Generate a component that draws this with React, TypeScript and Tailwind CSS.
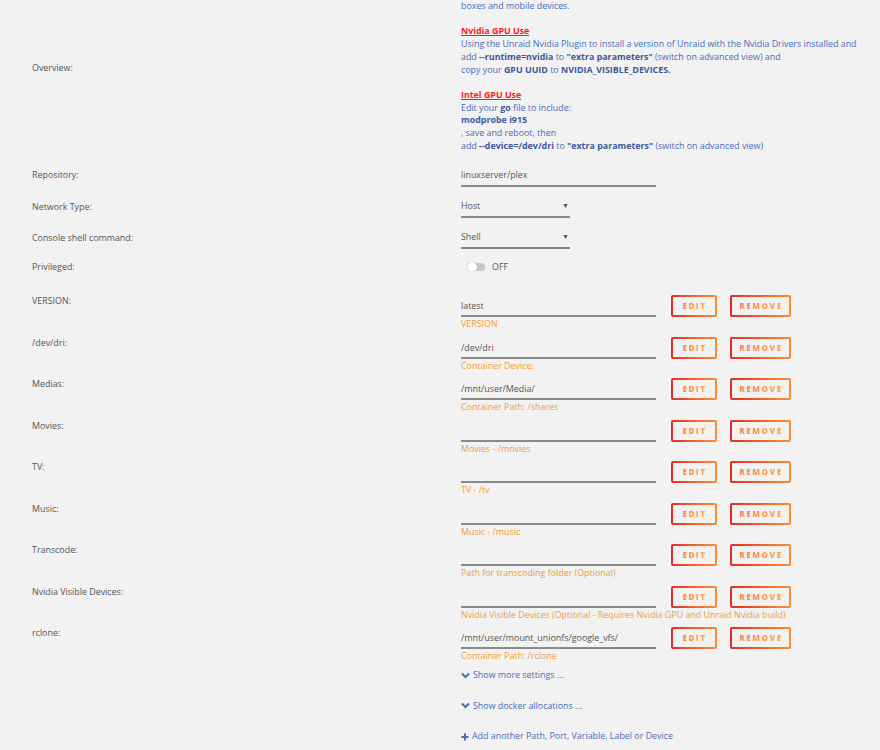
import React from 'react';

const font = { fontFamily: '"Open Sans", "Liberation Sans", sans-serif' };

interface ConfigRow {
  label: string;
  value: string;
  help: string;
}

const rows: ConfigRow[] = [
  { label: 'VERSION:', value: 'latest', help: 'VERSION' },
  { label: '/dev/dri:', value: '/dev/dri', help: 'Container Device:' },
  { label: 'Medias:', value: '/mnt/user/Media/', help: 'Container Path: /shares' },
  { label: 'Movies:', value: '', help: 'Movies - /movies' },
  { label: 'TV:', value: '', help: 'TV - /tv' },
  { label: 'Music:', value: '', help: 'Music - /music' },
  { label: 'Transcode:', value: '', help: 'Path for transcoding folder (Optional)' },
  { label: 'Nvidia Visible Devices:', value: '', help: 'Nvidia Visible Devices (Optional - Requires Nvidia GPU and Unraid Nvidia build)' },
  { label: 'rclone:', value: '/mnt/user/mount_unionfs/google_vfs/', help: 'Container Path: /rclone' },
];

const GradButton: React.FC<{ text: string; width: string }> = ({ text, width }) => (
  <div className={`bg-linear-to-r from-[#e22828] to-[#ff8c2f] p-[2px] rounded-[2px] h-[22px] ${width}`}>
    <div className="w-full h-full bg-[#f2f2f2] flex items-center justify-center">
      <span className="bg-linear-to-r from-[#f5894e] to-[#ffa650] bg-clip-text text-transparent text-[8px] font-extrabold tracking-[0.2em] leading-none pl-[1px]">
        {text}
      </span>
    </div>
  </div>
);

const Chevron = () => (
  <svg width="9" height="7" viewBox="0 0 10 7" className="mr-[3px]">
    <path d="M1 1.2 L5 5.2 L9 1.2" fill="none" stroke="#486dba" strokeWidth="2.2" />
  </svg>
);

const Plus = () => (
  <svg width="8" height="8" viewBox="0 0 8 8" className="mr-[3px]">
    <path d="M4 0.5 V7.5 M0.5 4 H7.5" fill="none" stroke="#486dba" strokeWidth="2" />
  </svg>
);

const Label: React.FC<{ children: React.ReactNode; className?: string }> = ({ children, className }) => (
  <div className={`pl-[32px] text-[#555] ${className ?? ''}`}>{children}</div>
);

export default function App() {
  return (
    <div className="min-h-screen w-[880px] h-[750px] overflow-hidden bg-[#f2f2f2] text-[8.9px] leading-[12.7px]" style={font}>
      {/* Overview */}
      <div className="grid grid-cols-[461px_1fr]">
        <Label className="pt-[62px]">Overview:</Label>
        <div className="text-[#486dba]">
          <p>boxes and mobile devices.</p>
          <p>&nbsp;</p>
          <p className="text-[#ff1a1a] font-bold underline">Nvidia GPU Use</p>
          <p>Using the Unraid Nvidia Plugin to install a version of Unraid with the Nvidia Drivers installed and</p>
          <p>add <b className="text-[#3d5a99]">--runtime=nvidia</b> to <b className="text-[#3d5a99]">"extra parameters"</b> (switch on advanced view) and</p>
          <p>copy your <b className="text-[#3d5a99]">GPU UUID</b> to <b className="text-[#3d5a99]">NVIDIA_VISIBLE_DEVICES.</b></p>
          <p>&nbsp;</p>
          <p className="text-[#ff1a1a] font-bold underline">Intel GPU Use</p>
          <p>Edit your <b className="text-[#3d5a99]">go</b> file to include:</p>
          <p><b className="text-[#3d5a99]">modprobe i915</b></p>
          <p>, save and reboot, then</p>
          <p>add <b className="text-[#3d5a99]">--device=/dev/dri</b> to <b className="text-[#3d5a99]">"extra parameters"</b> (switch on advanced view)</p>
        </div>
      </div>

      {/* Repository */}
      <div className="grid grid-cols-[461px_1fr] mt-[12px] h-[32px]">
        <Label className="pt-[5px]">Repository:</Label>
        <div className="w-[195px] h-[23px] border-b-2 border-[#8a8a8a] flex items-center text-[#555]">linuxserver/plex</div>
      </div>

      {/* Network Type */}
      <div className="grid grid-cols-[461px_1fr] h-[31px]">
        <Label className="pt-[5px]">Network Type:</Label>
        <div className="w-[109px] h-[22px] border-b-2 border-[#8a8a8a] flex items-center justify-between text-[#555]">
          <span>Host</span>
          <span className="text-[7px] pr-[1px]">▼</span>
        </div>
      </div>

      {/* Console */}
      <div className="grid grid-cols-[461px_1fr] h-[30px]">
        <Label className="pt-[5px]">Console shell command:</Label>
        <div className="w-[109px] h-[22px] border-b-2 border-[#8a8a8a] flex items-center justify-between text-[#555]">
          <span>Shell</span>
          <span className="text-[7px] pr-[1px]">▼</span>
        </div>
      </div>

      {/* Privileged */}
      <div className="grid grid-cols-[461px_1fr] h-[38px]">
        <Label className="pt-[4px]">Privileged:</Label>
        <div className="flex items-start pt-[6px] pl-[6px]">
          <div className="w-[18px] h-[8px] rounded-full bg-[#c8c8c8] relative">
            <div className="absolute left-0 top-[-1px] w-[10px] h-[10px] rounded-full bg-white shadow-[0_0_1px_rgba(0,0,0,0.4)]" />
          </div>
          <span className="ml-[7px] text-[#555] -mt-[2px]">OFF</span>
        </div>
      </div>

      {/* Config rows */}
      {rows.map((r) => (
        <div key={r.label} className="grid grid-cols-[461px_1fr] h-[41.5px]">
          <Label>{r.label}</Label>
          <div>
            <div className="flex items-center">
              <div className="w-[195px] h-[22px] border-b-2 border-[#8a8a8a] flex items-center pt-[2px] text-[#555]">{r.value}</div>
              <div className="ml-[15px]">
                <GradButton text="EDIT" width="w-[46px]" />
              </div>
              <div className="ml-[13px]">
                <GradButton text="REMOVE" width="w-[61px]" />
              </div>
            </div>
            <div className="text-[#f0a030] mt-[1px]">{r.help}</div>
          </div>
        </div>
      ))}

      {/* Links */}
      <div className="grid grid-cols-[461px_1fr]">
        <div />
        <div className="text-[#486dba]">
          <div className="flex items-center">
            <Chevron />
            <span>Show more settings ...</span>
          </div>
          <div className="flex items-center mt-[18px]">
            <Chevron />
            <span>Show docker allocations ...</span>
          </div>
          <div className="flex items-center mt-[18px]">
            <Plus />
            <span>Add another Path, Port, Variable, Label or Device</span>
          </div>
        </div>
      </div>
    </div>
  );
}
